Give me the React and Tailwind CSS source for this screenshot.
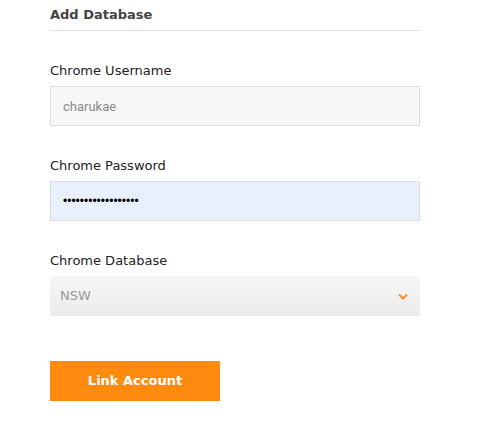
import { useState } from 'react';

function App() {
  const [username, setUsername] = useState('charukae');
  const [password, setPassword] = useState('••••••••••••••••••');

  return (
    <div className="min-h-screen bg-white" style={{ fontFamily: '"DejaVu Sans", sans-serif' }}>
      <div className="w-[370px] ml-[50px] pt-[7px]">
        <h2 className="text-[13px] leading-[16px] font-bold text-[#444] pb-[7px] border-b border-[#e5e5e5]">
          Add Database
        </h2>

        <div className="mt-[32px]">
          <label className="block text-[13px] text-[#222] leading-[16px]">Chrome Username</label>
          <input
            type="text"
            value={username}
            onChange={(e) => setUsername(e.target.value)}
            className="block mt-[7px] w-full h-[40px] px-3 bg-[#f7f7f7] border border-[#dddddd] text-[13px] text-[#8a8a8a] outline-none"
            style={{ fontFamily: 'Roboto, sans-serif' }}
          />
        </div>

        <div className="mt-[32px]">
          <label className="block text-[13px] text-[#222] leading-[16px]">Chrome Password</label>
          <div className="mt-[7px] w-full h-[40px] px-3 flex items-center bg-[#e8f0fe] border border-[#dddddd]">
            <span
              className="text-[12px] text-black leading-none"
              style={{ fontFamily: '"Liberation Sans", sans-serif' }}
            >
              {password}
            </span>
          </div>
        </div>

        <div className="mt-[32px]">
          <label className="block text-[13px] text-[#222] leading-[16px]">Chrome Database</label>
          <div className="mt-[7px] w-full h-[40px] pl-[10px] pr-[12px] flex items-center justify-between rounded-[2px] bg-gradient-to-b from-[#f7f7f7] to-[#ebebeb]">
            <span className="text-[13px] text-[#999]">NSW</span>
            <svg width="10" height="7" viewBox="0 0 10 7" fill="none">
              <path d="M1 1.5 L5 5.5 L9 1.5" stroke="#ff8a1f" strokeWidth="2" />
            </svg>
          </div>
        </div>

        <button
          type="button"
          className="block mt-[45px] w-[170px] h-[40px] bg-[#ff8a10] text-white text-[13px] font-bold"
        >
          Link Account
        </button>
      </div>
    </div>
  );
}

export default App;
